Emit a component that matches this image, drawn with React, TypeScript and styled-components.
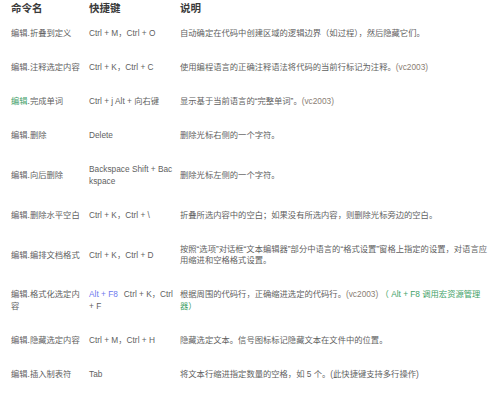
import React from "react"
import styled, { createGlobalStyle } from "styled-components"

const GlobalStyle = createGlobalStyle`
  html, body {
    margin: 0;
    padding: 0;
    background: #ffffff;
  }
`

const Page = styled.div`
  width: 500px;
  height: 393px;
  overflow: hidden;
  padding-left: 11px;
  box-sizing: border-box;
  font-family: "Liberation Sans", "Noto Sans CJK SC", sans-serif;
`

const Table = styled.table`
  width: 485px;
  table-layout: fixed;
  border-collapse: collapse;
  border-spacing: 0;
`

const HeadCell = styled.th`
  height: 17px;
  padding: 0 5px 0 0;
  text-align: left;
  vertical-align: middle;
  font-size: 10.5px;
  line-height: 17px;
  font-weight: 700;
  color: #3a3a3a;
  white-space: nowrap;
`

const Cell = styled.td<{ $breakAll?: boolean }>`
  padding: 11.25px 5px 11.25px 0;
  text-align: left;
  vertical-align: middle;
  font-size: 8.3px;
  line-height: 11.5px;
  color: #5f5f5f;
  word-break: ${(p) => (p.$breakAll ? "break-all" : "normal")};
`

const Tinted = styled.span<{ $tone: "green" | "blue"; $gap?: boolean }>`
  color: ${(p) => (p.$tone === "green" ? "#3f9f68" : "#6c78ee")};
  margin-right: ${(p) => (p.$gap ? "6px" : "0")};
`

const Note = styled.span`
  color: #8a7e74;
`

type Row = {
  name: React.ReactNode
  keys: React.ReactNode
  desc: React.ReactNode
}

const rows: Row[] = [
  {
    name: "编辑.折叠到定义",
    keys: "Ctrl + M，Ctrl + O",
    desc: "自动确定在代码中创建区域的逻辑边界（如过程），然后隐藏它们。",
  },
  {
    name: "编辑.注释选定内容",
    keys: "Ctrl + K，Ctrl + C",
    desc: (
      <>
        使用编程语言的正确注释语法将代码的当前行标记为注释。<Note>(vc2003)</Note>
      </>
    ),
  },
  {
    name: (
      <>
        <Tinted $tone="green">编辑</Tinted>.完成单词
      </>
    ),
    keys: "Ctrl + j Alt + 向右键",
    desc: (
      <>
        显示基于当前语言的“完整单词”。<Note>(vc2003)</Note>
      </>
    ),
  },
  {
    name: "编辑.删除",
    keys: "Delete",
    desc: "删除光标右侧的一个字符。",
  },
  {
    name: "编辑.向后删除",
    keys: "Backspace Shift + Backspace",
    desc: "删除光标左侧的一个字符。",
  },
  {
    name: "编辑.删除水平空白",
    keys: "Ctrl + K，Ctrl + \\",
    desc: "折叠所选内容中的空白；如果没有所选内容，则删除光标旁边的空白。",
  },
  {
    name: "编辑.编排文档格式",
    keys: "Ctrl + K，Ctrl + D",
    desc: "按照“选项”对话框“文本编辑器”部分中语言的“格式设置”窗格上指定的设置，对语言应用缩进和空格格式设置。",
  },
  {
    name: "编辑.格式化选定内容",
    keys: (
      <>
        <Tinted $tone="blue" $gap>
          Alt + F8
        </Tinted>
        Ctrl + K，Ctrl + F
      </>
    ),
    desc: (
      <>
        根据周围的代码行，正确缩进选定的代码行。<Note>(vc2003)</Note>{" "}
        <Tinted $tone="green">（ Alt + F8 调用宏资源管理器）</Tinted>
      </>
    ),
  },
  {
    name: "编辑.隐藏选定内容",
    keys: "Ctrl + M，Ctrl + H",
    desc: "隐藏选定文本。信号图标标记隐藏文本在文件中的位置。",
  },
  {
    name: "编辑.插入制表符",
    keys: "Tab",
    desc: "将文本行缩进指定数量的空格，如 5 个。(此快捷键支持多行操作)",
  },
]

export default function App() {
  return (
    <>
      <GlobalStyle />
      <Page>
        <Table>
          <colgroup>
            <col style={{ width: 78 }} />
            <col style={{ width: 91 }} />
            <col />
          </colgroup>
          <thead>
            <tr>
              <HeadCell>命令名</HeadCell>
              <HeadCell>快捷键</HeadCell>
              <HeadCell>说明</HeadCell>
            </tr>
          </thead>
          <tbody>
            {rows.map((row, i) => (
              <tr key={i}>
                <Cell>{row.name}</Cell>
                <Cell $breakAll>{row.keys}</Cell>
                <Cell>{row.desc}</Cell>
              </tr>
            ))}
          </tbody>
        </Table>
      </Page>
    </>
  )
}
